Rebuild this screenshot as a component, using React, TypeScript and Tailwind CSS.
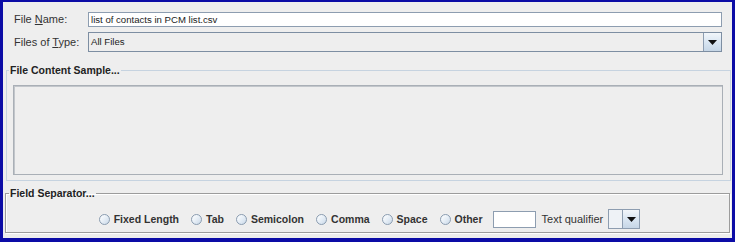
import React from "react";

function Radio({ label }: { label: string }) {
  return (
    <label className="flex items-center gap-[4px]">
      <span className="w-[11px] h-[11px] rounded-full border border-[#8a9cb0] bg-[linear-gradient(135deg,#ffffff_0%,#e6eef6_50%,#c9d8e8_100%)]" />
      <span className="font-bold text-[10.5px] leading-[13px] text-[#333333]">{label}</span>
    </label>
  );
}

function Arrow() {
  return (
    <svg width="9" height="5" viewBox="0 0 9 5">
      <polygon points="0,0 9,0 4.5,5" fill="#111111" />
    </svg>
  );
}

export default function App() {
  return (
    <div
      className="w-[735px] h-[242px] bg-[#eeeeee] border-l-[3px] border-r-[3px] border-t-2 border-b-4 border-[#0c0ca6] flex flex-col text-[#333333]"
      style={{ fontFamily: '"Liberation Sans", Arial, sans-serif' }}
    >
      <div className="flex items-center h-[15px] mt-[10px] pr-[10px]">
        <div className="w-[85px] pl-[11px] text-[11px] leading-[13px]">
          File <span className="underline">N</span>ame:
        </div>
        <div className="flex-1 h-[15px] bg-white border border-[#8d9db0] pl-[2px] text-[9.6px] leading-[13px] text-[#222]">
          list of contacts in PCM list.csv
        </div>
      </div>
      <div className="flex items-center h-[20px] mt-[5px] pr-[10px]">
        <div className="w-[85px] pl-[11px] text-[11px] leading-[13px]">
          Files of <span className="underline">T</span>ype:
        </div>
        <div className="flex-1 h-[20px] flex border border-[#7d8ea2] bg-[#eeeeee]">
          <div className="flex-1 pl-[2px] text-[9.6px] leading-[18px] text-[#222]">All Files</div>
          <div className="w-[18px] flex items-center justify-center border-l border-[#8d9db0] bg-[linear-gradient(180deg,#f2f6fa_0%,#dae6f2_50%,#c6d6e6_100%)]">
            <Arrow />
          </div>
        </div>
      </div>

      <fieldset className="mt-[12px] ml-[3px] mr-[1px] border border-[#c6d3e0]">
        <legend className="ml-[2px] px-[1px] font-bold text-[10.5px] leading-[13px] text-[#222]">
          File Content Sample...
        </legend>
        <div className="mt-[8px] ml-[6px] mr-[7px] mb-[5px] h-[90px] border border-[#a9afb6] shadow-[inset_1px_1px_0_#c2c6cb]" />
      </fieldset>

      <fieldset className="mt-[6px] ml-[2px] mr-[2px] border border-[#9c9c9c] shadow-[1px_1px_0_#ffffff,inset_1px_1px_0_#ffffff]">
        <legend className="ml-[3px] px-[1px] font-bold text-[10.5px] leading-[13px] text-[#222]">
          Field Separator...
        </legend>
        <div className="mt-[9px] mb-[3px] pl-[4px] h-[20px] flex items-center justify-center">
          <div className="flex items-center gap-[12px]">
            <Radio label="Fixed Length" />
            <Radio label="Tab" />
            <Radio label="Semicolon" />
            <Radio label="Comma" />
            <Radio label="Space" />
            <Radio label="Other" />
          </div>
          <div className="ml-[10px] w-[43px] h-[17px] bg-white border border-[#8d9db0]" />
          <div className="ml-[6px] text-[11px] leading-[13px]">Text qualifier</div>
          <div className="ml-[5px] w-[32px] h-[20px] flex border border-[#8d9db0]">
            <div className="flex-1 bg-[#eef2f6]" />
            <div className="w-[17px] flex items-center justify-center border-l border-[#8d9db0] bg-[linear-gradient(180deg,#f2f6fa_0%,#dae6f2_50%,#c6d6e6_100%)]">
              <Arrow />
            </div>
          </div>
        </div>
      </fieldset>
    </div>
  );
}
